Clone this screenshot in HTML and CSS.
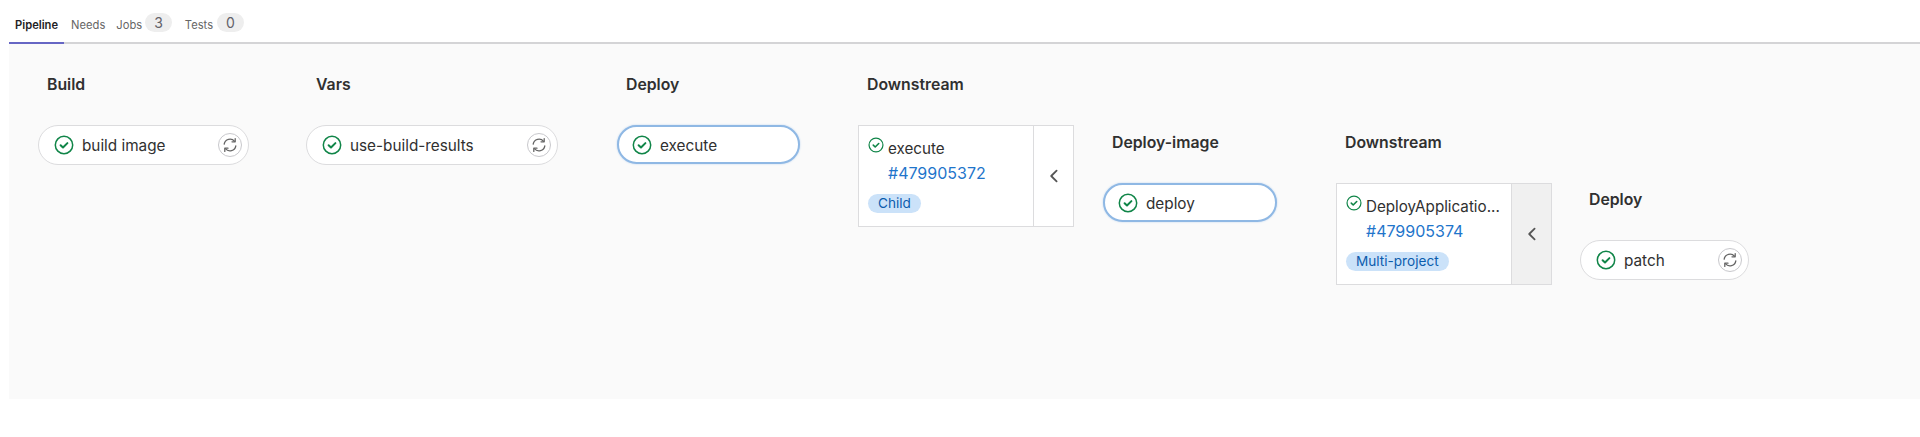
FILE: index.html
```html
<!DOCTYPE html>
<html lang="en">
<head>
  <meta charset="UTF-8" />
  <title>Pipeline</title>
  <link rel="stylesheet" href="styles.css">
</head>
<body>
  <svg class="defs" width="0" height="0">
    <symbol id="ok" viewBox="0 0 20 20">
      <circle cx="10" cy="10" r="8.7" fill="#fff" stroke="#108548" stroke-width="1.5"/>
      <path d="M6.6 10.2l2.4 2.3 4.4-4.4" fill="none" stroke="#108548" stroke-width="2" stroke-linecap="round" stroke-linejoin="round"/>
    </symbol>
    <symbol id="retry" viewBox="0 0 16 16">
      <path d="M2.2 7.2A5.9 5.9 0 0 1 12.6 4.3M13.8 8.8A5.9 5.9 0 0 1 3.4 11.7" fill="none" stroke="#666" stroke-width="1.3" stroke-linecap="round"/>
      <path d="M13.2 1.6v3.2h-3.2M2.8 14.4v-3.2h3.2" fill="none" stroke="#666" stroke-width="1.3" stroke-linecap="round" stroke-linejoin="round"/>
    </symbol>
    <symbol id="chevron" viewBox="0 0 16 16">
      <path d="M10.6 2.6L5.2 8l5.4 5.4" fill="none" stroke="#555" stroke-width="1.8" stroke-linecap="round" stroke-linejoin="round"/>
    </symbol>
  </svg>

  <div class="tabs">
    <a class="tab active">Pipeline</a>
    <a class="tab">Needs</a>
    <a class="tab tab-jobs">Jobs <span class="count">3</span></a>
    <a class="tab">Tests <span class="count">0</span></a>
  </div>

  <div class="panel">
    <div class="graph">
      <div class="stage first">
        <h3>Build</h3>
        <div class="job w-build">
          <svg class="status"><use href="#ok"/></svg>
          <span class="job-name">build image</span>
          <span class="retry"><svg><use href="#retry"/></svg></span>
        </div>
      </div>

      <div class="stage vars">
        <h3>Vars</h3>
        <div class="job w-vars">
          <svg class="status"><use href="#ok"/></svg>
          <span class="job-name">use-build-results</span>
          <span class="retry"><svg><use href="#retry"/></svg></span>
        </div>
      </div>

      <div class="stage">
        <h3>Deploy</h3>
        <div class="job w-execute selected">
          <svg class="status"><use href="#ok"/></svg>
          <span class="job-name">execute</span>
        </div>
      </div>

      <div class="stage">
        <h3>Downstream</h3>
        <div class="card">
          <div class="card-body">
            <div class="card-title">
              <svg class="card-status"><use href="#ok"/></svg>
              <span class="card-name">execute</span>
            </div>
            <a class="card-link">#479905372</a>
            <span class="badge">Child</span>
          </div>
          <div class="card-toggle"><svg><use href="#chevron"/></svg></div>
        </div>
      </div>

      <div class="stage near drop-1">
        <h3>Deploy-image</h3>
        <div class="job w-deploy selected">
          <svg class="status"><use href="#ok"/></svg>
          <span class="job-name">deploy</span>
        </div>
      </div>

      <div class="stage drop-1 second-card">
        <h3>Downstream</h3>
        <div class="card">
          <div class="card-body">
            <div class="card-title">
              <svg class="card-status"><use href="#ok"/></svg>
              <span class="card-name">DeployApplicatio...</span>
            </div>
            <a class="card-link">#479905374</a>
            <span class="badge">Multi-project</span>
          </div>
          <div class="card-toggle hover"><svg><use href="#chevron"/></svg></div>
        </div>
      </div>

      <div class="stage near drop-2 last">
        <h3>Deploy</h3>
        <div class="job w-patch">
          <svg class="status"><use href="#ok"/></svg>
          <span class="job-name">patch</span>
          <span class="retry"><svg><use href="#retry"/></svg></span>
        </div>
      </div>
    </div>
  </div>
</body>
</html>
```

FILE: styles.css
```css
* {
  box-sizing: border-box;
  font-family: Inter, 'Noto Sans', sans-serif;
}

body {
  margin: 0;
  padding: 0 0 38px 9px;
  background: #fff;
  color: #303030;
}

.defs {
  position: absolute;
}

.tabs {
  display: flex;
  height: 44px;
  padding-top: 12px;
  border-bottom: 2px solid #d4d4d6;
  font-size: 11.2px;
}

.tab {
  display: flex;
  align-items: flex-start;
  gap: 4px;
  height: 32px;
  padding: 6px 6px 0 7px;
  color: #666;
}

.tab.active {
  padding: 6px 6px 0 6px;
  color: #1f1e24;
  font-weight: 600;
  box-shadow: inset 0 -2px 0 #6666c4;
}

.tab.tab-jobs {
  gap: 3px;
  padding-left: 5px;
  padding-right: 6px;
}

.count {
  display: block;
  margin-top: -5px;
  padding: 0 9px;
  height: 19px;
  line-height: 19px;
  border-radius: 10px;
  background: #eeeeee;
  font-size: 14px;
  color: #626168;
}

.panel {
  height: 355px;
  background: #fafafa;
  padding: 30px 0 0 29px;
}

.graph {
  display: flex;
  gap: 58px;
}

.stage.first {
  margin-right: -1px;
}

.stage.vars {
  margin-right: 1px;
}

.stage.vars h3 {
  margin-left: 10px;
}

.stage.near {
  margin-left: -29px;
}

.stage.second-card {
  margin-left: 1px;
}

.stage.last {
  margin-left: -30px;
}

.stage h3 {
  margin: 0 0 29px 9px;
  font-size: 15.8px;
  line-height: 22px;
  font-weight: 600;
  color: #303030;
}

.drop-1 {
  margin-top: 58px;
}

.drop-2 {
  margin-top: 115px;
}

.job {
  display: flex;
  align-items: center;
  height: 40px;
  padding: 0 6px 0 15px;
  background: #fff;
  border: 1px solid #dcdcde;
  border-radius: 20px;
  font-size: 15.3px;
}

.job.selected {
  height: 39px;
  margin-top: 1px;
  border: 2px solid #8fb8e4;
  box-shadow: 0 0 2px #b5d0ee;
  padding: 1px 6px 0 13px;
}

.w-build { width: 211px; }
.w-vars { width: 252px; }
.w-execute { width: 183px; }
.w-deploy { width: 174px; }
.w-patch { width: 169px; }

.status {
  width: 20px;
  height: 20px;
  flex: none;
}

.job-name {
  flex: 1;
  margin-left: 8px;
}

.retry {
  display: flex;
  align-items: center;
  justify-content: center;
  width: 24px;
  height: 24px;
  background: #fff;
  border: 1px solid #c8c8cc;
  border-radius: 50%;
}

.retry svg {
  width: 16px;
  height: 16px;
}

.card {
  display: flex;
  width: 216px;
  height: 102px;
  background: #fff;
  border: 1px solid #dcdcde;
}

.card-body {
  flex: 1;
  min-width: 0;
  padding: 11px 8px 0 9px;
}

.card-title {
  display: flex;
  align-items: flex-start;
  height: 24px;
}

.card-status {
  width: 16px;
  height: 16px;
  flex: none;
}

.card-name {
  margin-left: 4px;
  font-size: 15.2px;
  line-height: 24px;
  white-space: nowrap;
}

.card-link {
  display: block;
  margin-left: 20px;
  font-size: 16px;
  line-height: 24px;
  color: #1f75cb;
}

.badge {
  display: inline-block;
  margin-top: 9px;
  padding: 0 10px;
  height: 19px;
  line-height: 19px;
  border-radius: 10px;
  background: #cbe2f9;
  color: #0b5cad;
  font-size: 13.6px;
}

.card-toggle {
  display: flex;
  align-items: center;
  justify-content: center;
  width: 40px;
  border-left: 1px solid #dcdcde;
}

.card-toggle.hover {
  background: #f0f0f0;
}

.card-toggle svg {
  width: 16px;
  height: 16px;
}
```
